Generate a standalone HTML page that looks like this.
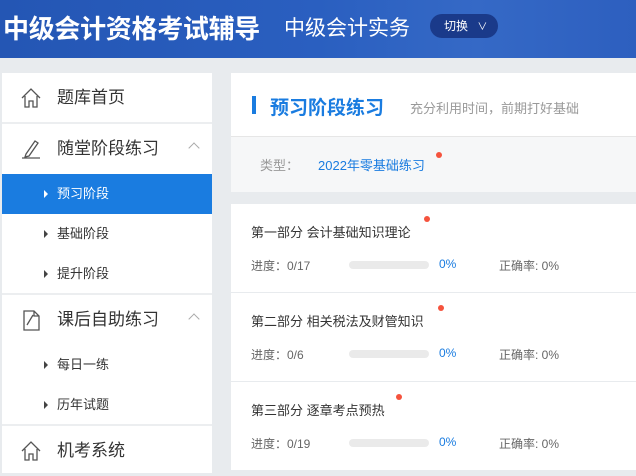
<!DOCTYPE html>
<html><head><meta charset="utf-8"><style>
*{margin:0;padding:0;box-sizing:border-box}
body{width:636px;height:465px;overflow:hidden;background:#e8ebee;font-family:"Liberation Sans","Noto Sans CJK SC",sans-serif;position:relative}
.hdr{position:absolute;left:0;top:0;width:636px;height:58px;background:linear-gradient(90deg,#2456b4 0%,#2a5fc0 50%,#3569c6 75%,#2d5fbf 100%)}
.t1{position:absolute;left:3px;top:9px;color:#fff;font-size:26px;font-weight:bold;letter-spacing:-0.3px}
.t2{position:absolute;left:284px;top:12px;color:#fff;font-size:21px}
.sw{position:absolute;left:430px;top:14px;width:68px;height:24px;border-radius:12px;background:#1a3a8a;color:#fff;font-size:12px;line-height:24px;padding-left:14px}
.side{position:absolute;left:2px;top:73px;width:210px;height:400px;background:#fff}
.it{position:absolute;left:0;width:210px}
.big{font-size:17px;color:#333;padding-left:55px;height:50px;line-height:50px}
.sub{font-size:13px;color:#333;padding-left:55px;height:40px;line-height:40px}
.sub:before{content:"";position:absolute;left:42px;top:16px;border-left:4px solid #444;border-top:4px solid transparent;border-bottom:4px solid transparent}
.act{background:#1a7ce0;color:#fff}
.act:before{border-left-color:#fff}
.ln{position:absolute;left:0;width:210px;height:2px;background:#eceef0}
.ic{position:absolute;left:18px;top:14px}
.car{position:absolute;right:14px;top:20px;width:8px;height:8px;border-left:1px solid #aaa;border-top:1px solid #aaa;transform:rotate(45deg)}
.main{position:absolute;left:231px;top:73px;width:405px}
.tt{height:64px;background:#fff;border-bottom:1px solid #e6e6e6;position:relative}
.bar{position:absolute;left:21px;top:23px;width:4px;height:18px;background:#1a7ce0}
.tt b{position:absolute;left:39px;top:20px;font-size:19px;color:#1a7ce0}
.tt span{position:absolute;left:179px;top:25px;font-size:13px;color:#999}
.ty{height:55px;background:#f6f7f8;position:relative;font-size:13px}
.dot{position:absolute;width:6px;height:6px;border-radius:3px;background:#f5533d}
.card{position:absolute;left:231px;width:405px;height:88px;background:#fff}
.card .n{position:absolute;left:20px;top:18px;font-size:13px;color:#333}
.card .p{position:absolute;top:53px;font-size:12px;color:#666}
.pb{position:absolute;left:118px;top:57px;width:80px;height:8px;border-radius:4px;background:#eaeaea}
</style></head><body>
<div class="hdr"><div class="t1">中级会计资格考试辅导</div><div class="t2">中级会计实务</div><div class="sw">切换 <span style="font-size:10px;margin-left:6px">∨</span></div></div>
<div class="side">
<div class="it big" style="top:0"><svg class="ic" width="22" height="22" viewBox="0 0 22 22" fill="none" stroke="#555" stroke-width="1.3"><path d="M2 11L11 2L20 11M5 9V20H9V14H13V20H17V9"/></svg>题库首页</div>
<div class="ln" style="top:49px"></div>
<div class="it big" style="top:51px"><svg class="ic" width="22" height="22" viewBox="0 0 22 22" fill="none" stroke="#555" stroke-width="1.3"><path d="M6 16L15 3L18 5L9 18L5 19Z M2 20H20"/></svg>随堂阶段练习<div class="car"></div></div>
<div class="it sub act" style="top:101px">预习阶段</div>
<div class="it sub" style="top:141px">基础阶段</div>
<div class="it sub" style="top:181px">提升阶段</div>
<div class="ln" style="top:220px"></div>
<div class="it big" style="top:222px"><svg class="ic" width="22" height="22" viewBox="0 0 22 22" fill="none" stroke="#555" stroke-width="1.3"><path d="M4 2H14L19 7V21H4Z M14 2V7H19 M7 16L13 6"/></svg>课后自助练习<div class="car"></div></div>
<div class="it sub" style="top:272px">每日一练</div>
<div class="it sub" style="top:312px">历年试题</div>
<div class="ln" style="top:351px"></div>
<div class="it big" style="top:353px"><svg class="ic" width="22" height="22" viewBox="0 0 22 22" fill="none" stroke="#555" stroke-width="1.3"><path d="M2 11L11 2L20 11M5 9V20H9V14H13V20H17V9"/></svg>机考系统</div>
</div>
<div class="main">
<div class="tt"><div class="bar"></div><b>预习阶段练习</b><span>充分利用时间，前期打好基础</span></div>
<div class="ty"><span style="position:absolute;left:29px;top:18px;color:#999">类型：</span><span style="position:absolute;left:87px;top:18px;color:#1a7ce0">2022年零基础练习</span><div class="dot" style="left:205px;top:15px"></div></div>
</div>
<div class="card" style="top:204px"><div class="n">第一部分 会计基础知识理论</div><div class="dot" style="left:193px;top:12px"></div><div class="p" style="left:20px">进度：0/17</div><div class="pb"></div><div class="p" style="left:208px;color:#1a7ce0">0%</div><div class="p" style="left:268px">正确率: 0%</div></div>
<div class="card" style="top:293px"><div class="n">第二部分 相关税法及财管知识</div><div class="dot" style="left:207px;top:12px"></div><div class="p" style="left:20px">进度：0/6</div><div class="pb"></div><div class="p" style="left:208px;color:#1a7ce0">0%</div><div class="p" style="left:268px">正确率: 0%</div></div>
<div class="card" style="top:382px"><div class="n">第三部分 逐章考点预热</div><div class="dot" style="left:165px;top:12px"></div><div class="p" style="left:20px">进度：0/19</div><div class="pb"></div><div class="p" style="left:208px;color:#1a7ce0">0%</div><div class="p" style="left:268px">正确率: 0%</div></div>
</body></html>
